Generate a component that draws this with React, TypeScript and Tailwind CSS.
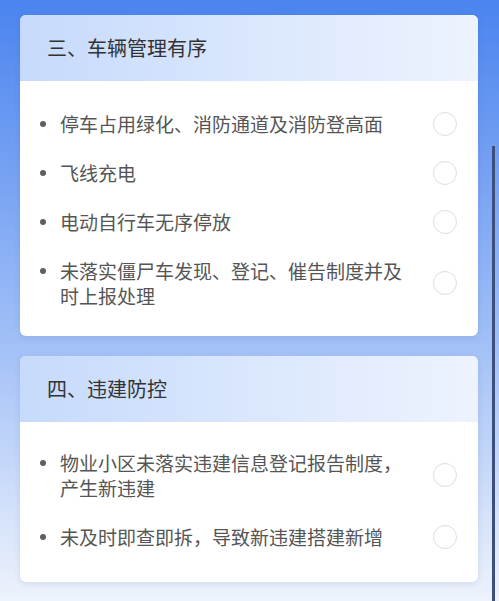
const sections = [
  {
    title: "三、车辆管理有序",
    pad: "pt-[18px] pb-4",
    items: [
      "停车占用绿化、消防通道及消防登高面",
      "飞线充电",
      "电动自行车无序停放",
      "未落实僵尸车发现、登记、催告制度并及时上报处理",
    ],
  },
  {
    title: "四、违建防控",
    pad: "pt-[16px] pb-[21px]",
    items: [
      "物业小区未落实违建信息登记报告制度，产生新违建",
      "未及时即查即拆，导致新违建搭建新增",
    ],
  },
];

function Item({ text }: { text: string }) {
  return (
    <li className="flex items-center py-3 pl-5 pr-[21px]">
      <div className="flex items-start gap-[14px]">
        <div className="flex h-[25px] items-center">
          <span className="h-[6px] w-[6px] rounded-full bg-[#5f5f5f]" />
        </div>
        <p className="w-[352px] text-[19px] leading-[25px] text-[#555555]">{text}</p>
      </div>
      <span className="ml-auto h-6 w-6 rounded-full border border-[#dedede] bg-white" />
    </li>
  );
}

export default function App() {
  return (
    <div
      className="relative h-[601px] w-[499px] overflow-hidden bg-[linear-gradient(180deg,#4b84ef_0%,#78a3f3_30%,#a3c1f7_58%,#d3e1fa_85%,#eef3fc_100%)] pl-5 pr-[21px] pt-[15px]"
      style={{ fontFamily: '"Noto Sans CJK SC", "Noto Sans", sans-serif' }}
    >
      <div className="flex flex-col gap-[20px]">
        {sections.map((s) => (
          <section
            key={s.title}
            className="overflow-hidden rounded-[6px] bg-white shadow-[0_2px_6px_rgba(40,70,140,0.12)]"
          >
            <div className="flex h-[66px] items-center bg-[linear-gradient(90deg,#c6dafb_0%,#dae7fd_50%,#edf3fe_100%)] pl-[27px]">
              <h2 className="text-[20px] font-normal text-[#333333]">{s.title}</h2>
            </div>
            <ul className={s.pad}>
              {s.items.map((t) => (
                <Item key={t} text={t} />
              ))}
            </ul>
          </section>
        ))}
      </div>
      <div className="absolute right-[4px] top-[146px] h-[455px] w-[3px] bg-[#3d4f7c]" />
    </div>
  );
}
